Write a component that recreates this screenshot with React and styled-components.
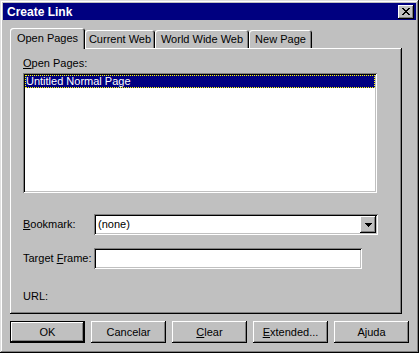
import React from 'react'
import styled, { createGlobalStyle } from 'styled-components'

const GlobalStyle = createGlobalStyle`
  html, body {
    margin: 0;
    padding: 0;
    background: #c0c0c0;
  }
  * {
    box-sizing: border-box;
  }
`;

const raised = `
  box-shadow: inset -1px -1px #000, inset 1px 1px #fff, inset -2px -2px #808080;
`;

const sunken = `
  box-shadow: inset 1px 1px #808080, inset -1px -1px #fff, inset 2px 2px #000, inset -2px -2px #c0c0c0;
`;

const Window = styled.div`
  width: 419px;
  height: 353px;
  padding: 3px;
  background: #c0c0c0;
  font-family: "Liberation Sans", Arial, sans-serif;
  font-size: 11px;
  color: #000;
  box-shadow: inset -1px -1px #000, inset 1px 1px #dfdfdf, inset -2px -2px #808080, inset 2px 2px #fff;
  display: flex;
  flex-direction: column;
`;

const TitleBar = styled.div`
  height: 17px;
  background: #000080;
  color: #fff;
  font-weight: bold;
  font-size: 12px;
  display: flex;
  align-items: center;
  justify-content: space-between;
  padding: 0 2px 0 4px;
`;

const CloseButton = styled.div`
  width: 16px;
  height: 14px;
  background: #c0c0c0;
  ${raised}
  display: flex;
  align-items: center;
  justify-content: center;
  padding-bottom: 1px;
`;

const Body = styled.div`
  padding: 8px 7px 0 7px;
  display: flex;
  flex-direction: column;
`;

const TabStrip = styled.div`
  display: flex;
  align-items: flex-end;
  height: 20px;
  position: relative;
  z-index: 1;
`;

const Tab = styled.div`
  width: ${p => p.$width};
  height: ${p => (p.$active ? '21px' : '18px')};
  margin-bottom: ${p => (p.$active ? '-1px' : '0')};
  display: flex;
  align-items: center;
  justify-content: center;
  padding-bottom: ${p => (p.$active ? '2px' : '1px')};
  background: #c0c0c0;
  border-top-left-radius: 3px;
  border-top-right-radius: 3px;
  box-shadow: inset 1px 1px #fff, inset -1px 0 #000, inset -2px 0 #808080;
  white-space: nowrap;
`;

const Panel = styled.div`
  width: 392px;
  height: 266px;
  padding: 9px 13px 0 13px;
  ${raised}
  display: flex;
  flex-direction: column;
`;

const Label = styled.div`
  height: 13px;
  line-height: 13px;
  white-space: nowrap;
  width: ${p => p.$width || 'auto'};
`;

const Key = styled.span`
  text-decoration: underline;
`;

const ListBox = styled.div`
  margin-top: 3px;
  width: 354px;
  height: 120px;
  background: #fff;
  padding: 2px;
  ${sunken}
`;

const ListItem = styled.div`
  height: 13px;
  line-height: 12px;
  padding-left: 1px;
  background: #000080;
  color: #fff;
  outline: 1px dotted #ffff00;
  outline-offset: -1px;
`;

const FieldRow = styled.div`
  display: flex;
  align-items: center;
  margin-top: ${p => p.$top || '0'};
`;

const Combo = styled.div`
  width: 284px;
  height: 21px;
  background: #fff;
  padding: 2px;
  display: flex;
  align-items: center;
  ${sunken}
`;

const ComboText = styled.div`
  flex: 1;
  padding-left: 2px;
  line-height: 17px;
`;

const DropButton = styled.div`
  width: 16px;
  height: 17px;
  background: #c0c0c0;
  ${raised}
  display: flex;
  align-items: center;
  justify-content: center;
`;

const TextField = styled.div`
  width: 268px;
  height: 21px;
  background: #fff;
  ${sunken}
`;

const ButtonRow = styled.div`
  display: flex;
  gap: 6px;
  margin-top: 7px;
`;

const Button = styled.div`
  width: 75px;
  height: 22px;
  display: flex;
  align-items: center;
  justify-content: center;
  background: #c0c0c0;
  ${p =>
    p.$default
      ? 'box-shadow: inset 0 0 0 1px #000, inset -2px -2px #000, inset 2px 2px #fff, inset -3px -3px #808080;'
      : raised}
`;

export default function App() {
  return (
    <>
      <GlobalStyle />
      <Window>
        <TitleBar>
          <span>Create Link</span>
          <CloseButton>
            <svg width="8" height="7" viewBox="0 0 8 7" shapeRendering="crispEdges">
              <path d="M0 0h2v1h-2zM6 0h2v1h-2zM1 1h2v1h-2zM5 1h2v1h-2zM2 2h4v1h-4zM3 3h2v1h-2zM2 4h4v1h-4zM1 5h2v1h-2zM5 5h2v1h-2zM0 6h2v1h-2zM6 6h2v1h-2z" fill="#000" />
            </svg>
          </CloseButton>
        </TitleBar>
        <Body>
          <TabStrip>
            <Tab $active $width="75px">Open Pages</Tab>
            <Tab $width="70px">Current Web</Tab>
            <Tab $width="94px">World Wide Web</Tab>
            <Tab $width="63px">New Page</Tab>
          </TabStrip>
          <Panel>
            <Label><Key>O</Key>pen Pages:</Label>
            <ListBox>
              <ListItem>Untitled Normal Page</ListItem>
            </ListBox>
            <FieldRow $top="21px">
              <Label $width="71px"><Key>B</Key>ookmark:</Label>
              <Combo>
                <ComboText>(none)</ComboText>
                <DropButton>
                  <svg width="7" height="4" viewBox="0 0 7 4" shapeRendering="crispEdges">
                    <path d="M0 0h7v1h-7zM1 1h5v1h-5zM2 2h3v1h-3zM3 3h1v1h-1z" fill="#000" />
                  </svg>
                </DropButton>
              </Combo>
            </FieldRow>
            <FieldRow $top="13px">
              <Label $width="71px">Target <Key>F</Key>rame:</Label>
              <TextField />
            </FieldRow>
            <FieldRow $top="21px">
              <Label>URL:</Label>
            </FieldRow>
          </Panel>
          <ButtonRow>
            <Button $default>OK</Button>
            <Button>Cancelar</Button>
            <Button><span><Key>C</Key>lear</span></Button>
            <Button><span><Key>E</Key>xtended...</span></Button>
            <Button>Ajuda</Button>
          </ButtonRow>
        </Body>
      </Window>
    </>
  )
}
